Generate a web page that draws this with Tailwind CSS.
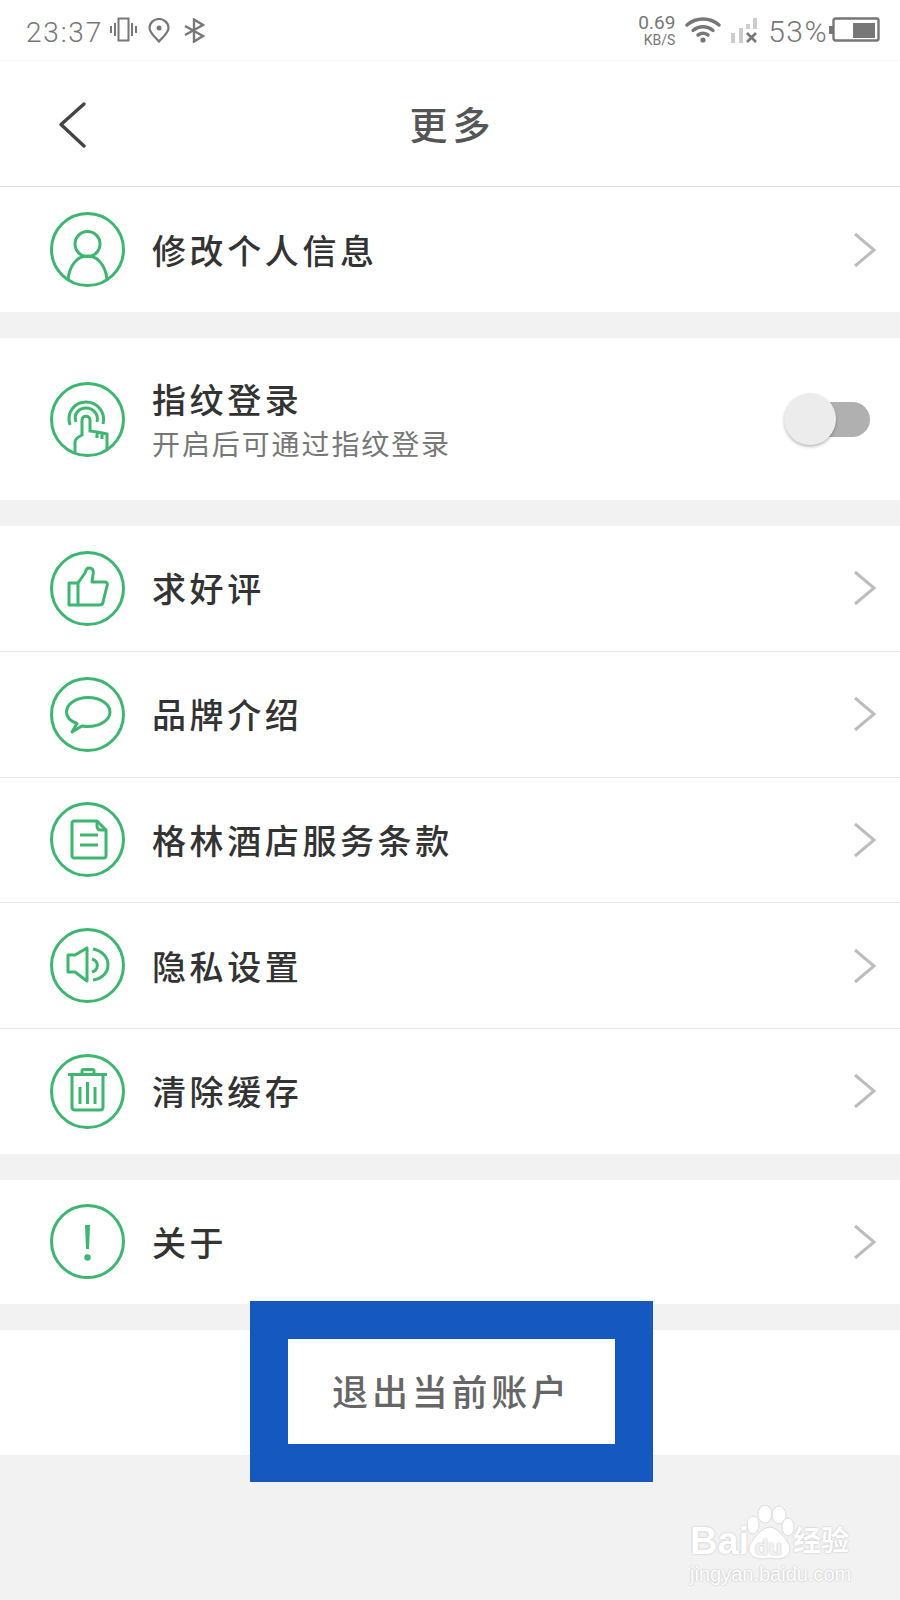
<!doctype html>
<html lang="zh">
<head>
<meta charset="utf-8">
<script src="https://cdn.jsdelivr.net/npm/@tailwindcss/browser@4"></script>
</head>
<body class="bg-[#f2f2f2]">
<div class="relative w-[900px] h-[1600px] overflow-hidden bg-[#f2f2f2] text-[#333] font-['Noto_Sans_CJK_SC',sans-serif]">

  <!-- status bar -->
  <div class="flex items-center h-[61px] bg-white border-b border-[#f8f8f8] pl-[26px] pr-[20px] text-[#777] font-['Roboto',sans-serif] font-light">
    <span class="w-[84px] text-[28px] leading-none tracking-[1.800px] pt-[5px]">23:37</span>
    <svg class="w-[27px] h-[26px]" viewBox="0 0 27 26" fill="none" stroke="#777" stroke-width="2"><rect x="8.5" y="1.5" width="10" height="22"/><path d="M5 6v13M1 9v7M22 6v13M26 9v7"/></svg>
    <svg class="ml-[11px] w-[22px] h-[25px]" viewBox="0 0 22 25" fill="none" stroke="#777" stroke-width="2.2"><path d="M11 23.5 C6 18 1.500 14.500 1.500 10 A9.500 9 0 0 1 20.500 10 C20.500 14.500 16 18 11 23.500Z"/><circle cx="11" cy="10" r="2.500" fill="#777" stroke="none"/></svg>
    <svg class="ml-[14px] w-[21px] h-[25px]" viewBox="0 0 21 25" fill="none" stroke="#777" stroke-width="2.4"><path d="M1 8 L19 18 L10 23.500 V1.500 L19 7 L1 17"/></svg>
    <div class="ml-auto w-[40px] flex flex-col items-end text-[#777] font-normal">
      <span class="text-[19px] leading-[20px] whitespace-nowrap">0.69</span>
      <span class="text-[14px] leading-[15px] whitespace-nowrap">KB/S</span>
    </div>
    <svg class="ml-[10px] w-[36px] h-[26px]" viewBox="0 0 36 26" fill="none" stroke="#777" stroke-width="3.4" stroke-linecap="round"><path d="M2 8 C11 0 25 0 34 8"/><path d="M8 13.500 C14 8.500 22 8.500 28 13.500"/><path d="M13 18 C16 16 20 16 23 18"/><circle cx="18" cy="23" r="2.600" fill="#777" stroke="none"/></svg>
    <svg class="ml-[9px] w-[28px] h-[26px]" viewBox="0 0 28 26"><rect x="1" y="16" width="4" height="10" fill="#ccc"/><rect x="9" y="11" width="4" height="15" fill="#ccc"/><rect x="16" y="7" width="4" height="5" fill="#ccc"/><rect x="23" y="1" width="4" height="11" fill="#ccc"/><path d="M17 16 L26 25 M26 16 L17 25" stroke="#777" stroke-width="2.600"/></svg>
    <span class="ml-[10px] text-[30px] leading-none tracking-[1.400px] pt-[3px]">53%</span>
    <svg class="ml-[1px] w-[51px] h-[26px]" viewBox="0 0 51 26" fill="none"><rect x="0" y="9" width="4" height="8" fill="#777"/><rect x="4.500" y="1.500" width="45" height="22" rx="2" stroke="#777" stroke-width="2.400"/><rect x="24" y="6" width="22" height="15" fill="#777"/></svg>
  </div>

  <!-- nav -->
  <div class="relative flex items-center justify-center h-[126px] bg-white border-b border-[#dcdcdc]">
    <svg class="absolute left-[58px] top-[40px] w-[30px] h-[48px]" viewBox="0 0 30 48" fill="none" stroke="#444" stroke-width="3.400" stroke-linecap="round" stroke-linejoin="round"><path d="M26 3 L3 23.500 L26 45"/></svg>
    <span class="text-[38px] leading-none font-medium tracking-[5px] text-[#555] pl-[5px] pb-[2px]">更多</span>
  </div>

  <!-- group 1 -->
  <div class="flex items-center h-[125px] bg-white pl-[50px] gap-[27px]">
    <svg class="w-[75px] h-[75px] shrink-0" viewBox="0 0 75 75" fill="none" stroke="#3db66f" stroke-width="3"><circle cx="37.500" cy="37.500" r="36"/><circle cx="37.500" cy="32" r="12.500"/><path d="M18 67 C20 52 28 44 37.500 44 C47 44 55 52 57 67"/></svg>
    <span class="text-[34px] leading-none font-medium tracking-[3.600px]">修改个人信息</span>
    <svg class="ml-auto mr-[23px] w-[24px] h-[36px]" viewBox="0 0 24 36" fill="none" stroke="#bdbdbd" stroke-width="3"><path d="M2 2 L21 18 L2 34"/></svg>
  </div>

  <!-- group 2 -->
  <div class="flex items-center h-[162px] mt-[26px] bg-white pl-[50px] gap-[27px]">
    <svg class="w-[75px] h-[75px] shrink-0" viewBox="0 0 75 75" fill="none" stroke="#3db66f" stroke-width="3"><circle cx="37.500" cy="37.500" r="36"/><path d="M20 43 C16 30 25 20 36 20 C47 20 56 30 53 42"/><path d="M26 40 C23 32 29 26 36 26 C43 26 49 32 47 40"/><path d="M25 71 V60 C25 57 28 55 32 53 V38 C32 33 40 33 40 38 V49 L47 50 V56 M47 50 L52 51 V57 M52 51 L57 52 V67"/></svg>
    <div class="flex flex-col pt-[6px]">
      <span class="text-[34px] leading-[38px] font-medium tracking-[3.600px]">指纹登录</span>
      <span class="mt-[4px] text-[28px] leading-[42px] tracking-[1.900px] text-[#777]">开启后可通过指纹登录</span>
    </div>
    <div class="relative ml-auto mr-[30px] w-[86px] h-[52px]">
      <div class="absolute right-0 top-[9px] w-[70px] h-[35px] rounded-full bg-[#b0b0b0]"></div>
      <div class="absolute left-0 top-0 w-[52px] h-[52px] rounded-full bg-[#ececec] shadow-[0_2px_3px_rgba(0,0,0,0.25)]"></div>
    </div>
  </div>

  <!-- group 3 -->
  <div class="mt-[26px] bg-white">
    <div class="flex items-center h-[125.800px] border-b border-[#e8e8e8] pl-[50px] gap-[27px]">
      <svg class="w-[75px] h-[75px] shrink-0" viewBox="0 0 75 75" fill="none" stroke="#3db66f" stroke-width="3" stroke-linejoin="round"><circle cx="37.500" cy="37.500" r="36"/><rect x="19" y="32" width="9" height="22" /><path d="M28 32 L35 22 C36 19 36 17 39 17 C43 17 44 20 43 24 L42 31 H55 C57 31 58 33 57 35 L53 51 C53 53 51 54 49 54 H28"/></svg>
      <span class="text-[34px] leading-none font-medium tracking-[3.600px]">求好评</span>
      <svg class="ml-auto mr-[23px] w-[24px] h-[36px]" viewBox="0 0 24 36" fill="none" stroke="#bdbdbd" stroke-width="3"><path d="M2 2 L21 18 L2 34"/></svg>
    </div>
    <div class="flex items-center h-[125.800px] border-b border-[#e8e8e8] pl-[50px] gap-[27px]">
      <svg class="w-[75px] h-[75px] shrink-0" viewBox="0 0 75 75" fill="none" stroke="#3db66f" stroke-width="3" stroke-linejoin="round"><circle cx="37.500" cy="37.500" r="36"/><path d="M16.500 35 C16.500 27 26 20.500 38 20.500 C50 20.500 60 27 60 35 C60 43 50 49.500 38 49.500 C36 49.500 34 49.300 32 49 L22 55 L27 46.500 C20 44 16.500 40 16.500 35Z"/></svg>
      <span class="text-[34px] leading-none font-medium tracking-[3.600px]">品牌介绍</span>
      <svg class="ml-auto mr-[23px] w-[24px] h-[36px]" viewBox="0 0 24 36" fill="none" stroke="#bdbdbd" stroke-width="3"><path d="M2 2 L21 18 L2 34"/></svg>
    </div>
    <div class="flex items-center h-[125.800px] border-b border-[#e8e8e8] pl-[50px] gap-[27px]">
      <svg class="w-[75px] h-[75px] shrink-0" viewBox="0 0 75 75" fill="none" stroke="#3db66f" stroke-width="3" stroke-linejoin="round"><circle cx="37.500" cy="37.500" r="36"/><path d="M24 19 H47 L56 28 V54 C56 55 55 56 54 56 H24 C23 56 22 55 22 54 V21 C22 20 23 19 24 19Z"/><path d="M47 19 V24 C47 26 48 28 51 28 H56"/><path d="M30 33 H48 M30 43 H48"/></svg>
      <span class="text-[34px] leading-none font-medium tracking-[3.600px]">格林酒店服务条款</span>
      <svg class="ml-auto mr-[23px] w-[24px] h-[36px]" viewBox="0 0 24 36" fill="none" stroke="#bdbdbd" stroke-width="3"><path d="M2 2 L21 18 L2 34"/></svg>
    </div>
    <div class="flex items-center h-[125.800px] border-b border-[#e8e8e8] pl-[50px] gap-[27px]">
      <svg class="w-[75px] h-[75px] shrink-0" viewBox="0 0 75 75" fill="none" stroke="#3db66f" stroke-width="3" stroke-linejoin="round"><circle cx="37.500" cy="37.500" r="36"/><path d="M18 27 H25 L37 20 V53 L25 44 H18Z"/><path d="M42 31 C49 33 49 42 42 44"/><path d="M43 21 C63 25 63 49 43 52"/></svg>
      <span class="text-[34px] leading-none font-medium tracking-[3.600px]">隐私设置</span>
      <svg class="ml-auto mr-[23px] w-[24px] h-[36px]" viewBox="0 0 24 36" fill="none" stroke="#bdbdbd" stroke-width="3"><path d="M2 2 L21 18 L2 34"/></svg>
    </div>
    <div class="flex items-center h-[124.500px] pl-[50px] gap-[27px]">
      <svg class="w-[75px] h-[75px] shrink-0" viewBox="0 0 75 75" fill="none" stroke="#3db66f" stroke-width="3" stroke-linejoin="round"><circle cx="37.500" cy="37.500" r="36"/><path d="M18 20.500 H57"/><path d="M32 20 V17 C32 16 33 15.500 34 15.500 H42 C43 15.500 44 16 44 17 V20"/><path d="M22 20.500 V53 C22 55 23 56 25 56 H50 C52 56 53 55 53 53 V20.500"/><path d="M30 33 V50 M37.500 28 V50 M45 33 V50"/></svg>
      <span class="text-[34px] leading-none font-medium tracking-[3.600px]">清除缓存</span>
      <svg class="ml-auto mr-[23px] w-[24px] h-[36px]" viewBox="0 0 24 36" fill="none" stroke="#bdbdbd" stroke-width="3"><path d="M2 2 L21 18 L2 34"/></svg>
    </div>
  </div>

  <!-- group 4 -->
  <div class="flex items-center h-[124px] mt-[26px] bg-white pl-[50px] gap-[27px]">
    <svg class="w-[75px] h-[75px] shrink-0" viewBox="0 0 75 75" fill="none" stroke="#3db66f" stroke-width="3"><circle cx="37.500" cy="37.500" r="36"/><path d="M35 21 H40 L39 45 H36Z" fill="#3db66f" stroke="none"/><circle cx="37.500" cy="53.500" r="3.200" fill="#3db66f" stroke="none"/></svg>
    <span class="text-[34px] leading-none font-medium tracking-[3.600px]">关于</span>
    <svg class="ml-auto mr-[23px] w-[24px] h-[36px]" viewBox="0 0 24 36" fill="none" stroke="#bdbdbd" stroke-width="3"><path d="M2 2 L21 18 L2 34"/></svg>
  </div>

  <!-- logout -->
  <div class="flex items-center justify-center h-[125px] mt-[26px] bg-white">
    <span class="text-[36px] leading-none font-medium tracking-[3.800px] text-[#666] pl-[3px] pb-[4px]">退出当前账户</span>
  </div>

  <!-- blue annotation frame -->
  <div class="absolute left-[250px] top-[1301px] w-[403px] h-[181px] border-[38px] border-[#1558c0]"></div>

  <!-- watermark -->
  <div class="absolute left-[688px] top-[1505px] w-[170px] h-[80px] text-white">
    <svg class="absolute left-[52px] top-0 w-[60px] h-[60px]" viewBox="0 0 60 60" fill="#fff" stroke="#dcdcdc" stroke-width="1"><ellipse cx="25" cy="9" rx="7" ry="9"/><ellipse cx="39" cy="10" rx="7" ry="9"/><ellipse cx="13" cy="20" rx="6" ry="9"/><ellipse cx="48" cy="22" rx="6" ry="9"/><path d="M30 22 C38 22 50 38 50 43 C50 54 38 55 30 53 C22 55 8 54 9 43 C10 36 22 22 30 22Z"/></svg>
    <span class="absolute left-[2px] top-[17px] text-[38px] leading-[38px] font-bold font-['Liberation_Sans',sans-serif] [text-shadow:0_0_2px_#b5b5b5]">Bai</span>
    <span class="absolute left-[67px] top-[32px] text-[22px] leading-[22px] text-[#f2f2f2] font-bold font-['Liberation_Sans',sans-serif] [text-shadow:0_0_2px_#b5b5b5]">du</span>
    <span class="absolute left-[105px] top-[18px] text-[28px] leading-[32px] font-bold [text-shadow:0_0_2px_#b5b5b5]">经验</span>
    <span class="absolute left-[2px] top-[58px] text-[20px] leading-[22px] font-['Liberation_Sans',sans-serif] [text-shadow:0_0_2px_#b0b0b0]">jingyan.baidu.com</span>
  </div>
</div>
</body>
</html>
